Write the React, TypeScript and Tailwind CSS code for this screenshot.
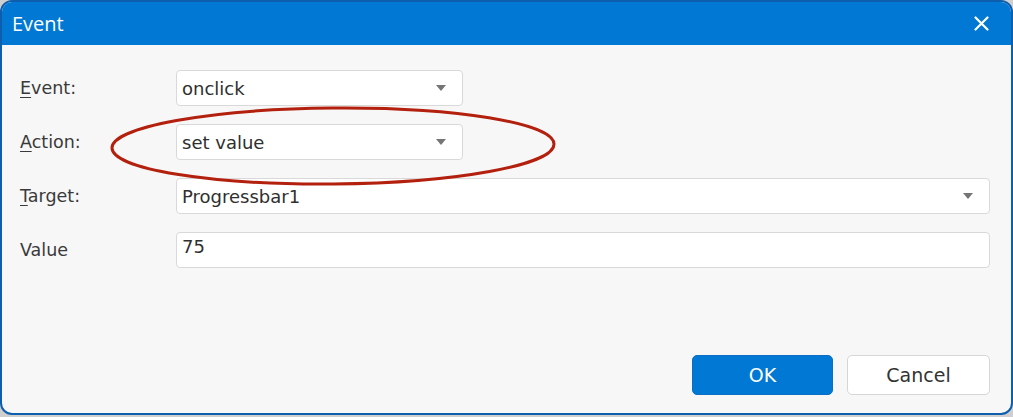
import React from "react";

function Arrow() {
  return (
    <svg width="10" height="6" viewBox="0 0 10 6" className="shrink-0">
      <path d="M0 0 L10 0 L5 6 Z" fill="#757575" />
    </svg>
  );
}

function Label({ first, rest }: { first: string; rest: string }) {
  return (
    <div className="w-[174px] shrink-0 pl-[18px] text-[17.5px] text-[#3a3a3a]" style={{ fontFamily: '"DejaVu Sans", "Liberation Sans", sans-serif' }}>
      {first ? <span className="underline underline-offset-[3px] decoration-1">{first}</span> : null}
      {rest}
    </div>
  );
}

function Field({ value, select, wide }: { value: string; select?: boolean; wide?: boolean }) {
  return (
    <div
      className={`${wide ? "w-[814px]" : "w-[287px]"} h-[36px] bg-white border border-[#d9d9d9] rounded-[4px] flex items-center pl-[5px] pr-[16px] text-[18px] text-[#2f2f2f]`}
      style={{ fontFamily: '"DejaVu Sans", "Liberation Sans", sans-serif' }}
    >
      <span className={`flex-1 ${select ? "" : "self-start leading-[28px]"}`}>{value}</span>
      {select ? <Arrow /> : null}
    </div>
  );
}

export default function App() {
  return (
    <div className="w-[1013px] h-[417px] bg-[#cfcfcf]">
      <div className="relative w-[1013px] h-[415px] rounded-[12px] border-2 border-[#0d5fae] overflow-hidden bg-[#f7f7f7] flex flex-col">
        <div className="h-[43px] bg-[#0078d4] flex items-center justify-between pl-[10px] pr-[22px] shrink-0">
          <span className="text-white text-[20px] pt-[1px]" style={{ fontFamily: '"Open Sans", "Noto Sans", sans-serif' }}>
            Event
          </span>
          <svg width="15" height="15" viewBox="0 0 15 15">
            <path d="M1.5 1.5 L13.5 13.5 M13.5 1.5 L1.5 13.5" stroke="white" strokeWidth="2.2" strokeLinecap="round" />
          </svg>
        </div>
        <div className="flex-1 flex flex-col pt-[25px] pb-[18px]">
          <div className="flex flex-col gap-[18px]">
            <div className="flex items-center">
              <Label first="E" rest="vent:" />
              <Field value="onclick" select />
            </div>
            <div className="flex items-center">
              <Label first="A" rest="ction:" />
              <Field value="set value" select />
            </div>
            <div className="flex items-center">
              <Label first="T" rest="arget:" />
              <Field value="Progressbar1" select wide />
            </div>
            <div className="flex items-center">
              <Label first="" rest="Value" />
              <Field value="75" wide />
            </div>
          </div>
          <div className="mt-auto flex justify-end gap-[14px] pr-[21px]" style={{ fontFamily: '"DejaVu Sans", "Liberation Sans", sans-serif' }}>
            <button className="w-[141px] h-[40px] rounded-[5px] bg-[#0078d4] border border-[#0a6fc4] text-white text-[19px]">
              OK
            </button>
            <button className="w-[143px] h-[40px] rounded-[5px] bg-white border border-[#d6d6d6] text-[#333] text-[19px]">
              Cancel
            </button>
          </div>
        </div>
        <svg className="absolute left-0 top-0 pointer-events-none" width="1013" height="415">
          <ellipse cx="331" cy="144" rx="221" ry="38" fill="none" stroke="#b3200e" strokeWidth="3" transform="rotate(-0.5 331 144)" />
        </svg>
      </div>
    </div>
  );
}
